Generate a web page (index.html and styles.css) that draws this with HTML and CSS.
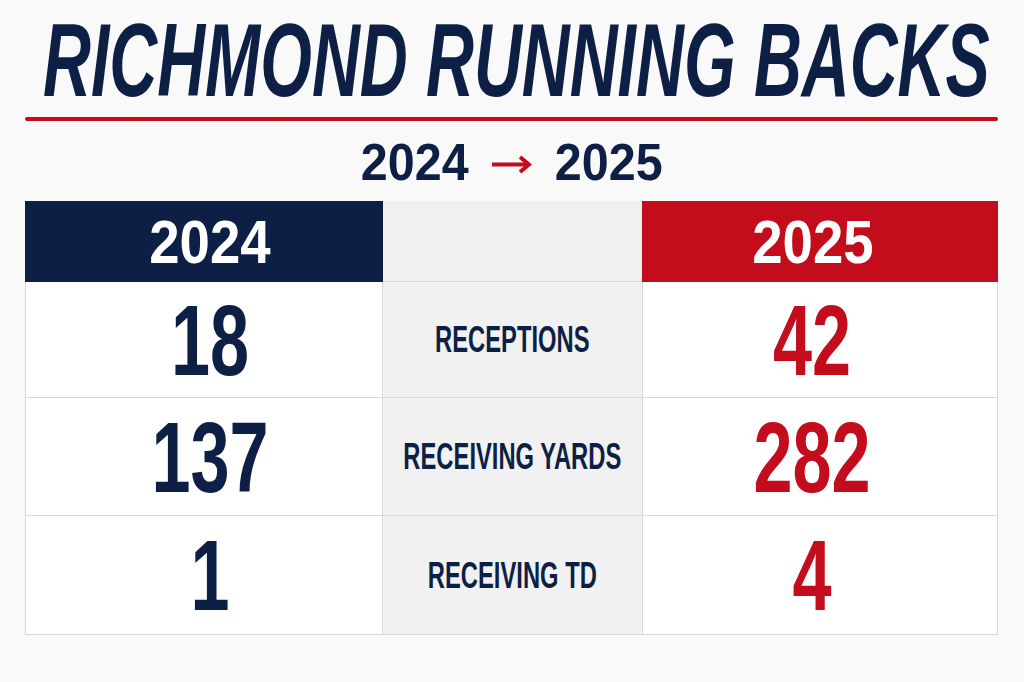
FILE: index.html
```html
<!DOCTYPE html>
<html lang="en">
<head>
<meta charset="utf-8">
<title>Richmond Running Backs</title>
<link rel="stylesheet" href="styles.css">
</head>
<body>
<div class="page">
  <header class="head">
    <h1 class="title"><span class="title-text">RICHMOND RUNNING BACKS</span></h1>
    <div class="rule"></div>
    <div class="sub">
      <span class="sub-yr">2024</span>
      <svg class="arrow" width="41" height="20" viewBox="0 0 41 20" aria-hidden="true">
        <path d="M1 10.5 H37" stroke="#c30d1c" stroke-width="4" fill="none"/>
        <path d="M29 3 L38 10.5 L29 18" stroke="#c30d1c" stroke-width="4" fill="none" stroke-linejoin="miter"/>
      </svg>
      <span class="sub-yr">2025</span>
    </div>
  </header>

  <div class="stats">
    <div class="cell hd hd-navy c1"><span class="hd-text">2024</span></div>
    <div class="cell hd hd-mid"></div>
    <div class="cell hd hd-red c3"><span class="hd-text">2025</span></div>

    <div class="cell num b1 navy"><span class="num-text">18</span></div>
    <div class="cell label"><span class="label-text">RECEPTIONS</span></div>
    <div class="cell num b3 red"><span class="num-text">42</span></div>

    <div class="cell num b1 navy"><span class="num-text">137</span></div>
    <div class="cell label"><span class="label-text">RECEIVING YARDS</span></div>
    <div class="cell num b3 red"><span class="num-text">282</span></div>

    <div class="cell num b1 navy"><span class="num-text">1</span></div>
    <div class="cell label"><span class="label-text">RECEIVING TD</span></div>
    <div class="cell num b3 red"><span class="num-text">4</span></div>
  </div>
</div>
</body>
</html>
```

FILE: styles.css
```css
* { box-sizing: border-box; }

html, body {
  margin: 0;
  padding: 0;
  background: #f9f9f9;
}

body {
  font-family: "Liberation Sans", Arial, sans-serif;
  font-weight: 700;
  color: #0d1f45;
}

.page {
  width: 1024px;
  height: 682px;
  padding: 0 26px 0 25px;
  overflow: hidden;
}

.head {
  display: flex;
  flex-direction: column;
}

.title {
  margin: 8px 0 0;
  height: 104px;
  font-size: 89px;
  line-height: 104px;
  font-style: italic;
  font-weight: 700;
  display: flex;
  justify-content: center;
  white-space: nowrap;
}

.title-text {
  display: inline-block;
  flex: none;
  transform: scale(0.745, 1.17);
  margin-left: 10px;
}

.rule {
  margin-top: 5px;
  height: 4px;
  border-radius: 2px;
  background: #c30d1c;
}

.sub {
  margin-top: 16px;
  height: 51px;
  display: flex;
  justify-content: center;
  align-items: center;
  gap: 20px;
  font-size: 51px;
  line-height: 51px;
}

.sub-yr {
  display: inline-block;
  transform: scaleX(0.95);
}

.arrow {
  display: block;
  margin-top: 2px;
}

.stats {
  margin-top: 13px;
  display: grid;
  grid-template-columns: 358px 259px 356px;
  grid-template-rows: 81px 116px 118px 119px;
}

.cell {
  display: flex;
  align-items: center;
  justify-content: center;
  white-space: nowrap;
}

.c1 { padding-left: 12px; }
.c3 { padding-right: 15px; }

.hd {
  font-size: 62px;
  line-height: 62px;
  color: #ffffff;
}

.hd-text {
  display: inline-block;
  transform: scaleX(0.88);
}

.hd-navy { background: #0d1f45; }
.hd-red { background: #c30d1c; }
.hd-mid {
  background: #f0f0f0;
  border-bottom: 1px solid #d8d8dc;
}

.num {
  font-size: 90px;
  line-height: 90px;
  background: #ffffff;
  border-bottom: 1px solid #d8d8dc;
}

.b1 {
  padding-left: 12px;
  border-left: 1px solid #d8d8dc;
  border-right: 1px solid #d8d8dc;
}

.b3 {
  padding-right: 15px;
  border-left: 1px solid #d8d8dc;
  border-right: 1px solid #d8d8dc;
}

.num-text {
  display: inline-block;
  transform: scale(0.78, 1.12);
}

.navy { color: #0d1f45; }
.red { color: #c30d1c; }

.label {
  background: #f1f1f1;
  border-bottom: 1px solid #d8d8dc;
  font-size: 33px;
  line-height: 33px;
  color: #0d1f45;
}

.label-text {
  display: inline-block;
  transform: scale(0.72, 1.12);
}
```
